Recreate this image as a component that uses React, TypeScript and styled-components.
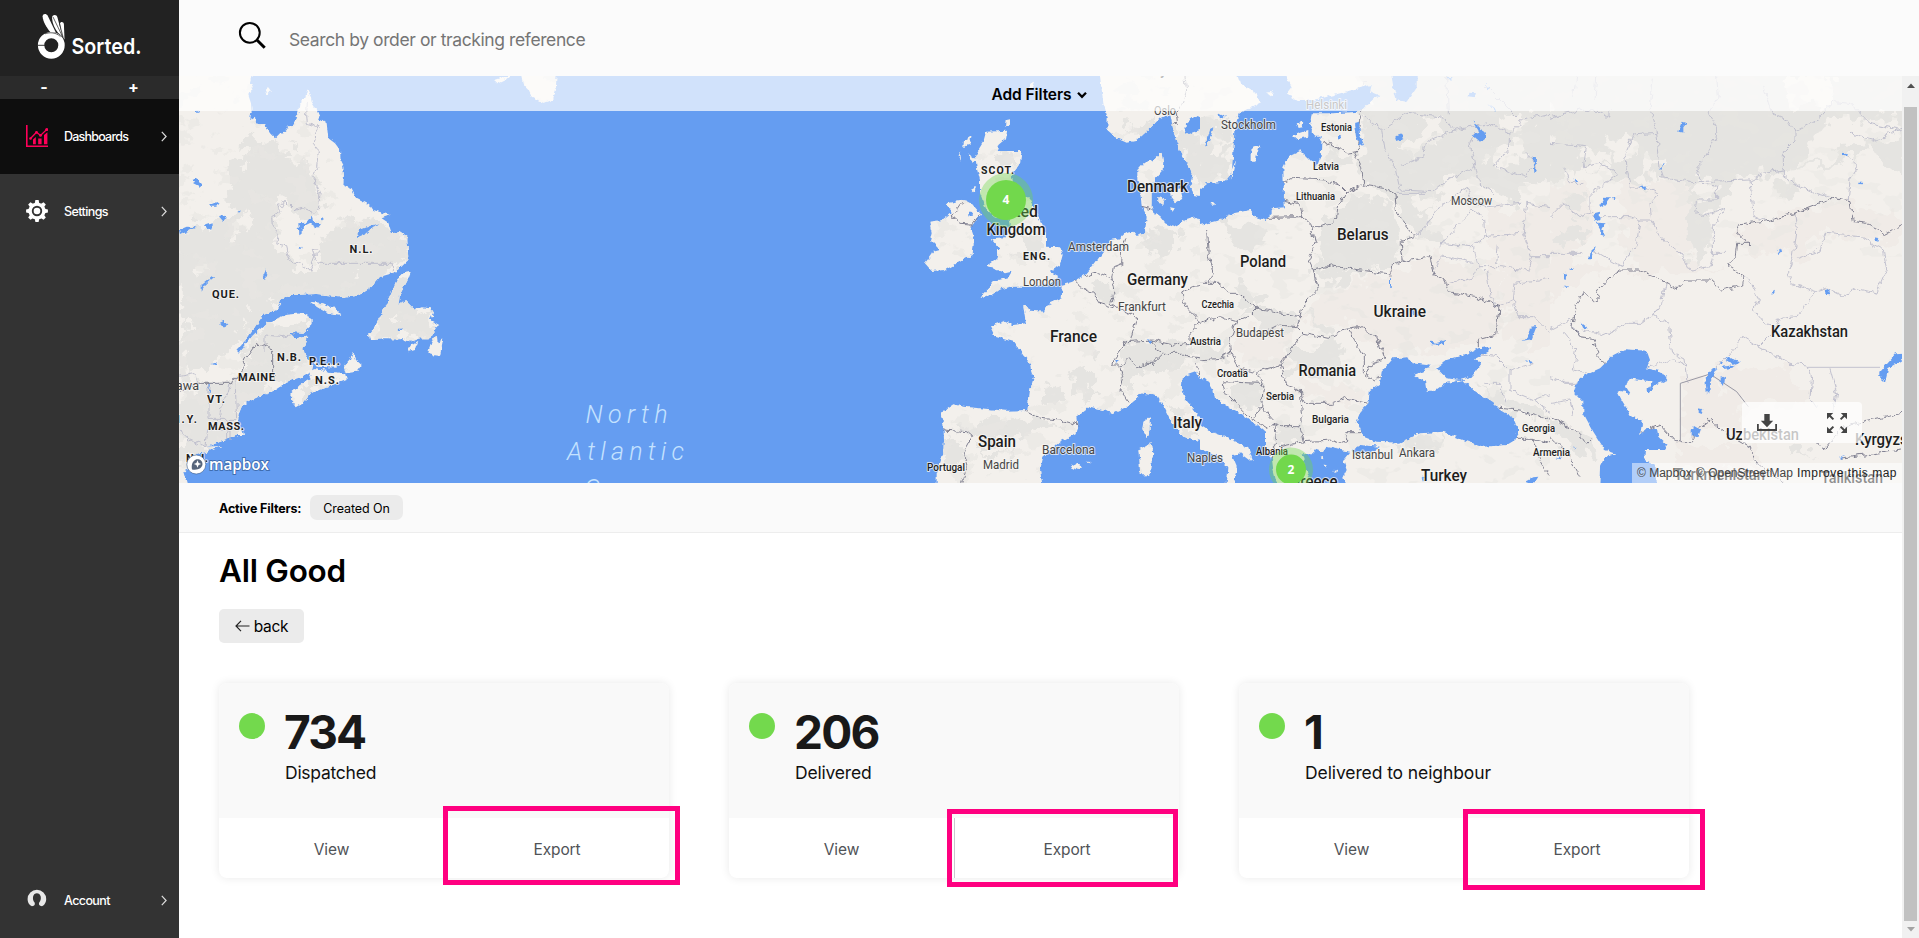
import React from "react";
import styled, { createGlobalStyle } from "styled-components";

const GlobalStyle = createGlobalStyle`
  * { box-sizing: border-box; }
  html, body, #root { height: 100%; }
  body { margin: 0; overflow: hidden; background: #fff; font-family: Inter, "Liberation Sans", sans-serif; color: #000; }
  button, input { font: inherit; border: 0; background: none; padding: 0; margin: 0; color: inherit; }
`;

/* ---------- shell ---------- */

const Shell = styled.div`
  display: flex;
  height: 938px;
  width: 1919px;
`;

const Sidebar = styled.aside`
  width: 179px;
  flex: none;
  display: flex;
  flex-direction: column;
  background: #333;
  color: #fff;
`;

const Brand = styled.div`
  height: 76px;
  background: #222;
`;

const SizeBar = styled.div`
  height: 23px;
  display: grid;
  grid-template-columns: 88px 91px;
  background: #2b2b2b;
`;

const SizeButton = styled.button`
  font-size: 16px;
  font-weight: 700;
  line-height: 23px;
  text-align: center;
`;

const NavItem = styled.a<{ $active?: boolean; $bottom?: boolean }>`
  height: 75px;
  margin-top: ${(p) => (p.$bottom ? "auto" : "0")};
  padding: 0 12px 0 26px;
  display: flex;
  align-items: center;
  background: ${(p) => (p.$active ? "#0e0e0e" : "transparent")};
`;

const NavIcon = styled.span`
  width: 38px;
  height: 24px;
  flex: none;
  svg { display: block; }
`;

const NavLabel = styled.span<{ $spacing: number }>`
  flex: 1;
  font-size: 12.5px;
  font-weight: 500;
  letter-spacing: ${(p) => p.$spacing}px;
`;

const Main = styled.main`
  flex: 1;
  min-width: 0;
  display: flex;
  flex-direction: column;
`;

const SearchBar = styled.header`
  height: 76px;
  flex: none;
  display: flex;
  align-items: flex-start;
  padding: 21px 0 0 59px;
  background: #fbfbfb;
`;

const SearchInput = styled.input`
  width: 420px;
  height: 24px;
  margin: 6px 0 0 21px;
  font-size: 17.5px;
  letter-spacing: -0.4px;
  outline: none;
  &::placeholder { color: #757575; opacity: 1; }
`;

const Body = styled.div`
  flex: 1;
  min-height: 0;
  display: flex;
`;

const Content = styled.div`
  width: 1723px;
  flex: none;
`;

const ScrollTrack = styled.div`
  width: 17px;
  display: flex;
  flex-direction: column;
  align-items: center;
  background: #f1f1f1;
`;

const ScrollThumb = styled.div`
  width: 13px;
  height: 814px;
  background: #c1c1c1;
`;

const ScrollArrow = styled.div<{ $down?: boolean }>`
  height: ${(p) => (p.$down ? "17px" : "31px")};
  padding-top: ${(p) => (p.$down ? "6px" : "7px")};
  svg { display: block; }
`;

/* ---------- map ---------- */

const MapPane = styled.section`
  position: relative;
  height: 407px;
  overflow: hidden;
  background: #659df1;
`;

const FilterBar = styled.button`
  position: absolute;
  inset: 0 0 auto 0;
  width: 100%;
  height: 35px;
  padding: 2px 2px 0 0;
  display: flex;
  align-items: center;
  justify-content: center;
  gap: 6px;
  background: rgba(255, 255, 255, 0.7);
  font-size: 15.5px;
  font-weight: 600;
  letter-spacing: -0.1px;
`;

const MapTools = styled.div`
  position: absolute;
  right: 40px;
  bottom: 40px;
  width: 120px;
  height: 41px;
  display: flex;
  align-items: center;
  justify-content: space-between;
  padding: 0 15px;
  border-radius: 4px;
  background: rgba(255, 255, 255, 0.75);
`;

const Attribution = styled.div`
  position: absolute;
  right: 0;
  bottom: 0;
  width: 270px;
  height: 20px;
  padding: 0 5px;
  display: flex;
  justify-content: space-between;
  background: rgba(255, 255, 255, 0.5);
  font: 12px/20px "Liberation Sans", sans-serif;
  white-space: nowrap;
`;

const Credit = styled.span<{ $spacing: number; $strong?: boolean }>`
  letter-spacing: ${(p) => p.$spacing}px;
  color: ${(p) => (p.$strong ? "#222" : "#444")};
`;

/* ---------- lower part ---------- */

const ActiveFilters = styled.div`
  height: 50px;
  padding: 0 40px 0 40px;
  display: flex;
  align-items: center;
  gap: 8px;
  border-bottom: 1px solid #ededed;
  background: #fafafa;
  font-size: 12.5px;
`;

const FilterTitle = styled.strong`
  width: 83px;
  padding-top: 2px;
  font-weight: 700;
  letter-spacing: -0.14px;
  white-space: nowrap;
`;

const Chip = styled.span`
  width: 93px;
  height: 25px;
  border-radius: 7px;
  background: #ebebeb;
  line-height: 27px;
  text-align: center;
  letter-spacing: -0.1px;
`;

const Panel = styled.div`
  padding: 21px 40px 0;
`;

const Title = styled.h1`
  margin: 0;
  height: 34px;
  font-size: 31.5px;
  line-height: 34px;
  font-weight: 600;
  letter-spacing: -0.25px;
`;

const BackButton = styled.button`
  display: flex;
  align-items: center;
  justify-content: center;
  gap: 4px;
  width: 85px;
  height: 34px;
  margin-top: 21px;
  border-radius: 5px;
  background: #ebebeb;
  font-size: 15.5px;
  letter-spacing: -0.3px;
`;

const Cards = styled.div`
  display: flex;
  gap: 60px;
  margin-top: 40px;
`;

const Card = styled.article`
  position: relative;
  width: 450px;
  height: 195px;
  border-radius: 8px;
  background: #fff;
  box-shadow: 0 0 10px rgba(0, 0, 0, 0.09);
`;

const CardTop = styled.div`
  height: 135px;
  display: flex;
  gap: 19px;
  padding: 30px 20px;
  border-radius: 8px 8px 0 0;
  background: #f9f9f9;
`;

const Dot = styled.span`
  width: 26px;
  height: 26px;
  flex: none;
  border-radius: 50%;
  background: #73d94d;
`;

const Count = styled.div`
  height: 38px;
  font-size: 46px;
  line-height: 39px;
  font-weight: 700;
  letter-spacing: -1.8px;
  color: #191919;
`;

const Status = styled.div<{ $spacing: number }>`
  margin: 11px 0 0 1px;
  font-size: 17.5px;
  line-height: 22px;
  letter-spacing: ${(p) => p.$spacing}px;
  color: #111;
`;

const CardActions = styled.div`
  height: 60px;
  display: grid;
  grid-template-columns: 1fr 1fr;
`;

const CardAction = styled.button`
  padding-top: 2px;
  font-size: 15.5px;
  color: #505357;
  letter-spacing: -0.1px;
  & + & { border-left: 1px solid #c9c9cd; }
`;

const Highlight = styled.div<{ $x: number; $y: number; $w: number; $h: number }>`
  position: absolute;
  left: ${(p) => p.$x}px;
  top: ${(p) => p.$y}px;
  width: ${(p) => p.$w}px;
  height: ${(p) => p.$h}px;
  border: 5px solid #ff0080;
  pointer-events: none;
`;

/* ---------- icons ---------- */

const Logo = () => (
  <svg width="179" height="76" viewBox="0 0 179 76" aria-label="Sorted.">
    <path d="M42.600 16.200c.2-2.800 3.700-3 5-.6l8.200 16.900-5.500-.5c-4-5-7.400-10.500-7.700-15.800z" fill="#fff" />
    <path d="M52 18c-.2-3.600 4.600-4.200 5.400-.8l5 19-4.200-3.200c-3.200-4.200-5.800-9-6.200-15z" fill="#fff" />
    <path d="M60 23.800c.2-2.600 3.600-2.500 3.900.2l.6 15.400-2.700-4.500z" fill="#fff" />
    <path d="m53 17 9.500 19.500M59.600 24l3.600 13.500" stroke="#222" strokeWidth=".7" fill="none" />
    <circle cx="51.300" cy="45.300" r="10.200" fill="none" stroke="#fff" strokeWidth="6.400" />
    <path d="M38 45.300h8" stroke="#222" strokeWidth=".9" />
    <path d="M45 33.800c5-1.800 11-1.400 15.500 2.800" stroke="#222" strokeWidth=".7" fill="none" />
    <text x="71.500" y="53.500" textLength="70" lengthAdjust="spacingAndGlyphs" fontFamily="Inter" fontSize="22" fontWeight="600" fill="#fff">Sorted.</text>
  </svg>
);

const Chevron = () => (
  <svg width="6" height="11" viewBox="0 0 6 11">
    <path d="m.8.900 4.300 4.600-4.300 4.600" fill="none" stroke="#ddd" strokeWidth="1.200" />
  </svg>
);

const ChartIcon = () => (
  <svg width="22" height="22" viewBox="0 0 22 22" fill="#ff0059">
    <path d="M0 0h1.600v20.400H22V22H0z" />
    <path d="M7 14.500 9.800 12v7.200H7zM12.200 13.400h3.400v5.800h-3.400zM18 10l3.400-2.800v12H18z" />
    <path d="m4.500 13.500 6-6.300 4 3.200L21 4.300" fill="none" stroke="#ff0059" strokeWidth="1.300" />
    <circle cx="4.500" cy="13.500" r="1.300" /><circle cx="10.500" cy="7.300" r="1.400" /><circle cx="14.500" cy="10.400" r="1.400" /><circle cx="20.700" cy="4.500" r="1.500" />
  </svg>
);

const GearIcon = () => (
  <svg width="22" height="22" viewBox="-11 -11 22 22" fill="#fff">
    {[0, 45, 90, 135, 180, 225, 270, 315].map((a) => (
      <path key={a} transform={`rotate(${a})`} d="M-2.300-7.500-1.600-10.900h3.200l.7 3.400z" />
    ))}
    <circle r="6.900" fill="none" stroke="#fff" strokeWidth="3.400" />
    <circle r="3.300" />
  </svg>
);

const AccountIcon = () => (
  <svg width="22" height="20" viewBox="0 0 22 20">
    <path d="M6 17.200C3.600 16.500 1.600 13.500 1.600 10a9.300 9.300 0 0 1 18.600 0c0 3.500-1.900 6.400-4.200 7.200-2.900-.4-3.500-1.600-2.800-3.600 1.400-1.500 1.900-3.700 1.500-6-.8-4.600-6.800-4.600-7.600 0-.4 2.300 0 4.500 1.500 6 .7 2 .1 3.200-2.600 3.600z" fill="#e8e8e8" />
  </svg>
);

const SearchIcon = () => (
  <svg width="30" height="30" viewBox="0 0 30 30" fill="none" stroke="#000">
    <circle cx="11.800" cy="11.800" r="9.900" strokeWidth="2" />
    <path d="m18.700 18.700 8 8" strokeWidth="3" />
  </svg>
);

const DownloadIcon = () => (
  <svg width="20" height="18" viewBox="0 0 20 18" fill="#444">
    <path d="M7.300 0h5.400v6.800h3.500L10 13.200 3.800 6.800h3.500z" />
    <path d="M0 10h1.800v5h16.400v-5H20v7H0z" />
  </svg>
);

const ExpandIcon = () => (
  <svg width="20" height="20" viewBox="-10 -10 20 20" fill="#444" stroke="#444">
    {[0, 90, 180, 270].map((a) => (
      <g key={a} transform={`rotate(${a})`}>
        <path d="M-10-10h6.200l-6.200 6.200z" stroke="none" />
        <path d="m-8-8 4.400 4.400" strokeWidth="2" />
      </g>
    ))}
  </svg>
);

/* ---------- map data ---------- */

const AMERICA = [
  "-20,-20 245,-20 245,18 240,35 248,50 235,75 243,100 245,125 240,150 255,140 258,160 285,165 300,190 315,205 330,190 345,185 355,170 375,160 385,125 388,100 405,85 412,58 422,80 425,95 440,120 450,145 470,160 475,205 495,220 510,240 512,275 520,290 522,320 520,345 545,355 560,385 600,405 610,420 660,435 635,445 655,458 665,490 690,485 712,500 715,570 690,595 668,610 630,620 605,650 575,672 520,680 440,672 365,675 335,685 322,718 280,735 255,770 235,800 202,840 205,848 250,795 290,760 345,735 395,730 425,745 425,765 400,788 355,785 375,805 415,800 400,835 405,855 430,885 425,905 400,920 350,935 330,950 315,960 275,975 245,990 215,1010 205,1035 205,1060 210,1080 230,1095 205,1095 165,1110 110,1130 155,1128 110,1145 85,1150 60,1195 40,1205 55,1260 -20,1260",
  "415,905 440,895 480,905 525,910 530,930 490,945 450,960 425,965 400,1000 380,1012 363,990 365,965 390,945 425,925",
  "550,845 558,870 575,885 560,905 530,910 522,890 540,870",
  "430,870 450,885 500,880 500,893 440,890",
  "420,695 460,700 495,715 512,735 470,728 440,710",
  "722,605 700,610 680,630 665,665 640,720 620,760 597,795 600,810 640,808 700,808 720,815 750,805 780,805 800,770 808,765 780,750 790,730 780,715 755,712 735,720 715,700 705,690 685,705 690,670 715,625",
  "800,795 803,820 820,808 810,858 790,855 775,845 785,815",
  "745,812 735,840 712,847 725,825",
  "1048,-10 1160,-10 1158,50 1145,90 1120,98 1085,80 1075,60 1060,45",
  "975,30 1000,22 1030,10 1010,26 985,38",
  "295,52 302,62 290,75 286,65",
];
const AMERICA_LAKES = [
  "67,330 80,325 95,342 90,350 70,340", "118,405 140,396 152,400 135,410 120,410", "145,440 160,435 172,445 158,455",
  "108,465 125,460 125,475 115,478", "27,480 50,470 80,472 60,480 30,495", "200,425 208,420 208,432",
  "385,460 408,458 425,437 430,452 448,465 440,475 420,462 395,475 395,495 388,492", "452,445 460,442 460,452",
  "562,502 570,480 600,468 625,460 605,475 585,492", "385,538 398,530 395,540", "277,625 288,598 292,615 285,630",
  "95,662 95,645 130,617 132,622 105,645", "150,758 162,752 172,765 160,770", "125,885 140,880 140,885", "78,122 90,122 88,128 78,128",
  "115,940 119,940 120,970 114,965", "682,780 692,774 690,784",
];
const AMERICA_PATCHES = [
  "170,270 230,215 320,210 410,260 440,340 460,440 390,440 330,390 310,460 330,560 390,600 680,600 560,680 330,690 240,800 170,850 40,930 27,480 90,470 180,420",
  "460,480 560,440 600,440 700,490 720,570 640,610 440,600", "640,640 710,620 690,700 790,730 780,800 610,800",
  "250,790 420,730 420,790 400,900 330,940 220,1000 200,1100 40,1180 27,950 200,930", "380,960 520,910 560,880 400,1000",
];
const AMERICA_LIGHT = [
  "215,290 240,265 250,295 225,310", "205,430 240,420 250,470 215,490 190,510", "350,440 430,460 420,560 350,570 335,500",
  "330,260 400,215 410,280 360,280", "65,590 100,580 110,610 75,615", "240,715 265,715 260,730", "70,900 200,850 190,920 100,940",
  "50,755 75,755 75,775 50,775", "200,760 215,755 220,770", "555,605 565,615 545,625", "675,740 690,730 688,755", "150,200 230,195 220,225 150,240",
];
const AMERICA_BORDERS = [
  "M412,95 L410,130 L412,160 L440,170 L450,165 L435,190 L430,220 L445,240 L440,290 L430,330 L440,350 L450,375 L445,420 L435,430 L400,415 L375,420 L345,390 L335,410 L320,405 L330,425 L308,440 L310,470 L325,490 L320,525 L350,530 L360,570 L385,580 L420,600 L435,560 L430,535 L450,545 L435,560 L445,580 H670 V610",
  "M285,840 V795 L340,800 L375,790",
  "M195,925 L200,1050 M180,940 L175,970 L155,995 L148,1045 M117,940 V1048 H195 M108,1080 H180 V1110 M170,1050 V1105 M110,1080 L105,1130 L60,1110 L27,1080 M27,920 L75,910 L80,940",
];
const AMERICA_NATIONS = ["M27,970 L70,940 H180 L185,925 L210,925 L225,870 L260,820 L270,832 L290,825 L308,845 V905 L320,930"];

const EUROPE = [
  "660,-20 660,18 665,60 670,100 683,140 682,180 710,205 740,218 770,212 810,175 840,145 870,130 880,180 890,220 905,255 930,295 940,320 932,345 940,375 975,380 975,350 1020,335 1020,-20",
  "1020,460 975,470 950,440 920,450 880,470 855,460 840,440 820,425 815,410 815,370 822,330 848,300 850,275 845,248 820,270 790,280 772,300 772,335 780,350 785,410 800,440 795,490 770,498 760,485 735,490 720,505 690,510 680,530 645,580 615,615 580,635 548,645 545,685 500,705 492,725 450,722 440,708 430,710 438,760 400,765 375,752 330,768 345,800 400,815 425,850 450,880 455,910 462,920 450,960 442,1020 380,1022 300,1015 250,1010 220,1003 180,1030 190,1060 192,1110 190,1150 170,1210 170,1260 490,1260 480,1200 490,1160 540,1115 590,1090 595,1065 592,1040 630,1010 660,1018 700,1030 740,1010 785,970 830,978 850,1010 870,1050 910,1100 970,1115 1000,1140 1020,1150 1020,1090 980,1075 960,1045 935,1010 915,985 905,960 908,920 950,905 965,940 985,950 1010,990 1020,990",
  "870,360 905,355 910,385 885,400 872,385", "835,378 855,385 850,405 835,395", "870,412 885,415 875,422",
  "318,185 382,182 378,205 355,225 350,243 425,243 420,280 395,315 400,340 450,390 480,450 498,490 498,530 540,532 548,555 540,585 510,605 535,618 510,640 450,650 390,650 355,660 335,675 300,682 345,632 385,622 395,605 375,610 345,598 315,590 350,565 355,535 335,508 375,505 390,470 385,440 340,435 320,420 300,370 300,330 290,290 285,260 298,235 310,215",
  "275,195 270,220 250,232 252,210", "262,250 292,270 280,278", "240,245 243,272 236,260", "272,360 290,350 280,368",
  "200,400 245,392 275,400 300,430 285,455 270,475 282,510 278,555 240,575 195,600 155,603 135,580 160,545 180,540 150,510 155,490 148,455 190,450 215,430",
  "812,1040 812,1080 800,1105 787,1080 790,1055", "775,1140 815,1120 820,1150 810,1205 795,1220 780,1205 778,1170",
  "572,1190 590,1180 605,1190 592,1200", "380,150 390,148 390,164 378,170", "620,1175 632,1176 628,1180", "450,40 462,35 455,55 445,60",
];
const EUROPE_LAKES = [
  "918,160 950,135 970,140 960,180 915,195", "990,175 1000,190 975,235 975,205", "265,425 277,425 275,438 265,436", "705,870 720,870 710,878", "800,810 820,815 812,822",
];
const EUROPE_PATCHES = [
  "880,180 960,200 1020,140 1020,340 950,350 900,250", "740,170 820,140 830,170 770,205", "330,240 400,230 410,290 340,290",
  "510,930 540,940 530,1010 480,1000", "570,880 640,870 640,960 580,990", "730,820 900,810 960,870 900,890 780,900 740,960 720,900",
  "800,480 900,470 900,540 830,570", "230,1080 350,1040 480,1050 560,1070 420,1090 340,1120", "290,1140 420,1140 330,1165",
  "630,640 700,650 690,710 640,680", "440,490 480,490 480,570 410,570", "200,1100 250,1120 240,1200 190,1200", "850,1000 930,1050 960,1110 900,1090",
];
const EUROPE_BORDERS = [
  "M915,18 L920,60 L905,110 L885,125 L890,160 L878,162", "M785,412 L818,420", "M975,470 L985,500 L980,560 L1000,610 L990,640 L940,650 L905,672 L925,720 L960,755 L930,790 L930,820 L880,825 L815,810 L740,815 L700,870 L695,885 L720,885 L750,865 L770,890 L800,880 L820,880 L850,850 L830,840 L815,815 M850,850 L905,850 L930,860 L1020,870 M945,870 L960,915 L1010,915 M720,890 L730,930 L720,960 L750,1000",
  "M738,505 L728,540 L725,580 L700,590 L695,620 L705,665 L690,700 L715,715 L770,740 L750,815 M580,630 L600,650 L640,670 L660,700 L705,715 M615,620 L655,608 L690,622",
  "M432,1020 L480,1045 L540,1050 L595,1065", "M190,1080 L260,1085 L278,1100 L250,1150 L262,1190 L245,1239", "M300,430 L275,462 L240,460 L215,440 L235,415 L245,400",
];

const EAST_WATER = [
  "100,-20 255,-20 258,18 275,50 260,70 290,90 340,90 400,75 460,60 490,50 515,45 510,65 535,75 500,105 480,125 400,130 335,130 330,165 345,200 365,200 362,260 350,290 325,265 300,240 270,255 250,295 252,390 255,412 215,415 215,435 195,450 165,440 150,420 100,430 60,450 -20,470 -20,375 20,340 75,335 95,310 100,250 103,180 120,130 180,100 170,70 120,40",
  "570,-10 650,-10 650,50 620,95 590,90 580,50", "462,160 478,155 480,195 492,225 480,228 468,200", "585,200 605,193 610,208 590,213",
  "815,150 838,175 855,185 860,200 840,215 818,195 838,188", "1000,260 1008,258 1007,290 1011,307 1003,305", "805,68 828,70 825,85 803,82", "742,20 758,22 750,30", "858,38 868,58 862,62",
  "865,102 888,120 885,125", "414,198 422,198 422,208 414,208", "15,230 30,180 40,175 25,220", "55,130 75,140 60,145",
  "580,865 625,862 635,880 680,885 695,880 680,900 645,915 675,935 680,965 700,965 735,940 790,930 820,960 880,1000 900,1020 940,1045 955,1080 945,1110 920,1125 850,1130 790,1110 730,1085 660,1090 600,1118 530,1115 490,1100 480,1075 470,1055 485,1020 505,1000 510,960 540,940 545,905",
  "870,830 865,845 825,865 845,880 815,920 780,930 740,925 710,895 740,870 790,855 835,835",
  "-20,935 20,925 40,960 45,985 90,1015 120,1030 165,1060 195,1085 195,1135 215,1160 220,1200 235,1260 -20,1260",
  "305,1150 345,1150 340,1135 370,1145 380,1130 420,1140 450,1145 430,1170 440,1200 430,1220 445,1260 340,1260 320,1200", "455,1140 480,1125 540,1130 520,1145 460,1150",
  "690,815 710,818 735,810 735,822 712,824 690,822", "567,625 573,625 573,653 567,653", "622,715 640,718 662,735 640,735",
  "990,770 1010,768 995,808 968,812 985,798", "978,870 995,876 990,882", "665,1222 672,1220 670,1235", "975,1235 1000,1222 1015,1220 1000,1245",
];
const EAST_ISLANDS = [
  "155,235 180,225 172,250 165,275 152,275 152,255", "108,270 103,300 92,328 95,300", "280,195 325,180 325,200 285,208", "290,160 310,155 308,172 296,174", "200,68 218,66 215,80",
  "-20,1050 35,1085 75,1100 145,1135 158,1170 150,1172 120,1150 95,1155 110,1190 100,1260 78,1260 85,1195 60,1160 -20,1130", "30,397 45,400 38,408",
  "370,1180 380,1182 375,1190", "400,1200 412,1198 408,1210", "360,1165 368,1160 370,1168",
];
const EAST_PATCHES = [
  "490,100 1100,100 1100,340 960,340 960,420 900,380 830,320 740,330 680,460 740,500 700,520 640,500 590,400 490,330", "-10,150 100,160 90,320 -10,340",
  "480,-20 1100,-20 1100,120 500,120", "350,480 450,370 580,400 600,520 570,600 480,600 380,600", "60,460 180,480 220,500 120,540", "330,560 380,600 540,610 400,640 350,620",
  "120,720 280,720 300,780 180,780", "300,720 400,780 430,900 380,900 260,930 270,840 360,840 390,810", "90,940 190,940 180,1040 90,980", "230,1060 310,1060 300,1130 240,1130",
  "140,640 200,680 160,720 100,680", "370,220 460,240 470,300 380,280", "830,940 960,1000 1050,1040 1050,1060 900,1010", "590,1120 730,1090 720,1130 600,1150", "-10,830 90,820 60,880 -10,880",
];
const EAST_LIGHT = [
  "700,140 740,150 720,200 640,250 600,230", "880,230 960,200 990,260 900,300", "740,340 800,330 820,370 750,400", "640,380 700,370 710,410 650,430", "830,250 870,260 850,290", "30,190 80,200 70,240 40,240", "900,150 940,130 1000,150 960,190",
];
const EAST_PINK = ["360,660 560,620 700,560 900,600 900,800 700,860 560,850 440,760 300,760", "860,430 1100,400 1100,860 920,800 900,600", "300,940 500,960 480,1000 320,990", "110,790 290,780 240,880 120,880"];
const EAST_BORDERS = [
  "M490,100 L480,150 L470,190 L478,235 L465,250 L485,290 L492,345 L460,360 L435,375 L410,415 L405,455 L365,470 L335,470", "M365,225 L390,218 L440,250 L470,245", "M250,340 L280,325 L375,330 L420,345 L445,370",
  "M245,392 L300,405 L308,440 L200,442 M308,440 L330,460 L345,520 L325,570 L340,600 L352,660 L305,710 L300,740 L200,720 L170,715 L120,670 L85,670 L60,640 L0,640", "M20,480 L25,560 L40,610 L25,640", "M492,345 L550,355 L585,375 L590,430 L645,500 L600,515 L610,575 L575,585 L572,612 L480,600 L400,585 L340,600",
  "M610,575 L690,560 L700,615 L735,630 L745,665 L830,680 L900,710 L890,795 L835,810 V835", "M170,715 L145,740 L110,755 L60,740 L0,760 M110,755 L90,810 L95,850 L60,865 L0,870 M95,850 L120,895 L170,905 L240,885 L310,790 L290,770 L240,765 L170,800 M290,770 L305,735 M310,790 L385,805 L440,775 L475,770 L530,800 L555,870 L520,880 L495,915 L525,930 L545,920 M440,775 L490,860 L490,910",
  "M240,885 L260,945 L300,960 L315,1000 L400,1000 L440,985 L505,1000 M170,905 L190,950 L185,1010 L220,1050 M65,935 L180,940 M65,935 L80,970 L160,1055 M185,1010 L160,1050 L200,1075 L225,1060 L250,1070 L300,1070 L310,1115 L400,1110 L435,1120 L440,1085 L485,1085 M300,960 L310,1060 M225,1060 L230,1120 L215,1170 M310,1115 L240,1130",
  "M900,1015 L960,1020 L1050,1050 M945,1105 L1000,1105 L1080,1130 M1000,1105 L1020,1170 L1060,1239",
];
const EAST_REGIONS = [
  "M490,140 L545,180 L555,240 L585,290 L600,360 M600,360 L700,365 L740,330 L825,290 L840,340 L880,370 M545,180 L620,130 L720,140 L765,180 L680,215 L670,260 L600,290 M765,180 L820,170 L870,160 L930,190 L925,240 L880,290 L980,320 L1005,280 L975,250 M825,290 L810,220 L825,180 M590,370 L680,370 M680,460 L720,410 L800,350 L815,390 L860,410 L960,400 M650,500 L690,450 M720,530 L780,460 L815,420 L850,440 L855,500 L810,530 L720,520 M820,530 L835,590 L820,620 L745,640 M700,600 L725,560 L820,580 M835,590 L900,590 L985,600 L995,560 L970,490 L980,400 L1050,410 M895,520 L890,580 M855,500 L960,490 M860,600 L870,680 L895,710 L940,690 L945,640 L1050,625 M995,560 L1050,560 M930,190 L970,150 L1050,130 M740,18 L745,130 M480,50 L500,30 M850,40 L960,150 M940,690 L950,740 L1000,740 L1050,790 M835,850 L890,860 L930,900 L1000,880 M930,900 L930,960 L1000,990 L1050,970 M850,940 L900,940 L915,1000 M1000,990 L1050,1030",
];

const ASIA_WATER = [
  "190,855 225,838 290,842 300,870 290,895 335,905 352,930 320,942 305,955 300,970 292,960 310,935 235,925 228,950 240,970 200,960 215,990 245,1040 278,1050 270,1095 290,1078 320,1075 325,1100 350,1125 340,1140 285,1140 283,1170 310,1180 320,1190 320,1260 148,1260 150,1190 165,1160 198,1152 165,1140 130,1085 100,1030 100,995 72,965 80,935 105,915 150,895",
  "470,970 466,925 485,898 502,895 480,935 478,970", "512,918 525,925 522,947 512,940", "525,860 572,874 560,885 530,875", "515,890 550,886 548,893 520,897", "513,878 522,878 518,886",
  "1080,850 1035,853 1010,880 988,905 988,920 1005,935 1015,895 1080,855", "432,1068 453,1080 445,1102 425,1095 425,1080", "445,1015 460,1018 455,1032 446,1028",
  "385,185 395,155 410,160 400,172 400,188", "325,295 342,280 338,288 330,300", "265,350 285,350 290,360", "148,410 165,382 183,382 170,400 152,410", "186,380 197,382 190,388",
  "132,430 150,425 148,450 135,455", "140,458 168,460 157,478 165,498 152,494 150,475", "118,568 122,540 138,528 128,550 123,568", "70,325 85,338 78,340", "57,597 72,592 66,602", "42,612 50,608 47,630 42,628", "40,648 54,645 48,654",
  "92,757 113,773 100,775", "878,248 891,250 888,256 878,255", "925,335 940,335 935,343 925,342", "972,502 988,505 985,515 975,512", "683,548 694,534 696,542 686,552", "664,668 675,662 672,672", "826,660 838,656 840,676 826,675", "868,1160 885,1155 870,1168", "20,1165 40,1155 35,1168", "70,1128 85,1135 75,1136",
];
const ASIA_PATCHES = [
  "-10,-20 1080,-20 1080,290 1000,300 960,230 880,290 780,290 690,300 600,320 540,330 540,380 480,450 470,560 430,590 410,500 420,350 380,320 320,330 280,350 240,340 180,300 100,290 -10,340",
  "30,370 100,380 90,430 50,420", "20,480 90,470 100,510 40,520", "680,340 750,340 730,380 680,370", "700,1120 760,1130 800,1170 720,1150", "-10,1040 80,1070 130,1120 140,1170 60,1140",
];
const ASIA_LIGHT = [
  "170,210 230,190 260,230 220,270 160,240", "780,200 860,150 1040,140 1050,200 880,220 840,270 760,280", "100,250 180,260 200,290 110,290", "430,320 500,340 500,390 440,380", "290,260 340,270 310,340 270,320", "690,20 850,20 840,110 720,110",
];
const ASIA_PINK = [
  "-10,340 100,340 130,440 60,560 200,600 50,650 -10,690", "200,330 420,340 410,580 520,610 300,610 240,590", "560,480 740,430 850,390 1080,440 1080,500 960,510 820,490 740,570 560,520", "500,900 560,870 700,900 780,980 740,1010 590,1000 510,930", "395,940 480,920 590,1000 560,1080 450,1080 395,1100", "380,1120 600,1130 640,1200 400,1200",
];
const ASIA_BORDERS = [
  "M165,880 L140,860 L150,850 L125,805 L90,800 L68,770 L80,700 L100,665 L130,695 L145,690 L140,660 L190,615 L215,600 L265,600 L345,635 L380,658 L405,630 L480,630 L515,660 L578,645 L582,618 L530,585 L555,560 L560,520 L600,520 L560,490 L570,465 L660,450 L735,430 L850,385 L900,395 L910,455 L950,460 L990,480 L1000,495 L1056,465",
  "M272,1090 L330,1065 L375,1115 L425,1115 M425,1110 L430,1085 L480,1048 L530,1090 L600,1130 L620,1180 L700,1239 M800,1120 L820,1140 L880,1070 L1056,1030 M870,1165 L1056,1140 M0,1040 L60,1070 L110,1120 L130,1100 M0,1100 L60,1160 L90,1220",
];
const ASIA_REGIONS = [
  "M95,780 L160,795 L235,760 L275,760 L310,735 L355,760 L365,850 L405,870 L415,940 M345,640 L335,700 L310,735 M285,890 L370,870 L408,885 M500,895 L550,840 L580,800 L625,830 L720,880 L770,885 L785,920 L780,980 L800,1010 M625,830 L665,790 L690,745 L740,740 L800,665 L830,655 L880,680 L920,655 L980,670 L1010,600 L1000,540 L930,500 L825,490 L810,540 L740,565 M735,430 L740,490 L730,560 L715,600 L725,640 L800,665 M585,620 L610,650 L625,690 L610,720 L650,765 L690,770 M840,895 L860,970 L850,1030",
  "M0,145 L90,120 L150,125 L180,140 L180,120 M80,20 L70,80 M140,20 L135,90 M310,20 L300,120 L320,190 L330,290 L340,320 M500,20 L505,80 L475,130 L500,170 L500,200 L460,270 L440,290 L455,340 L500,345 M640,50 L665,130 L710,150 L735,185 L735,210 L700,245 L700,320 L740,345 L800,370 L850,385 M735,185 L800,150 L850,95 L900,100 L960,160 L1056,180 M900,190 L980,215 L1056,170 M885,250 L925,290 L900,330 L895,390 M330,320 L430,335 L600,330 L610,440 L640,450 M600,330 L640,310 L700,300 M320,190 L250,195 L225,250 L240,350 L300,355 L325,370 L300,400 L305,450 L340,510 L400,560 L420,600 L480,590 L490,550 L530,550 M530,415 L490,470 L490,550 M500,345 L500,390 L440,390 L435,420 L460,440 L525,415 M100,290 L150,280 L200,310 M120,430 L120,370 L200,315 M130,440 L240,440 L270,450 L300,450 M270,450 L260,520 L215,590 M130,540 L215,590 M0,440 L40,400 L90,440 L130,430 M0,550 L100,550 M40,290 L60,340 L100,340 M0,220 L110,230 L100,290",
  "M0,780 L60,750 L90,800 M40,790 L80,840 L70,900 L110,910 M0,920 L50,940 L80,940 M0,1000 L60,990 L70,1040",
];

type Label = [string, number, number, number, number, number];
/* text, left, right, baseline, size, weight */
const LABELS: Label[] = [
  ["N.L.", 349.5, 372.5, 253, 11, 700], ["QUE.", 212, 239, 298, 11, 700], ["N.B.", 277, 301, 361, 11, 700], ["P.E.I.", 309, 340, 364.5, 11, 700],
  ["N.S.", 315, 339, 384, 11, 700], ["MAINE", 238, 275, 381, 11, 700], ["VT.", 207, 225, 402.5, 11, 700], ["MASS.", 208, 244, 429.5, 11, 700],
  ["N.Y.", 172, 197, 423, 11, 700], ["Ottawa", 159, 199, 390, 12.5, 400], ["N.J.", 186, 208, 462, 11, 700],
  ["SCOT.", 981, 1014, 174, 10.5, 700], ["United", 992, 1038, 217, 16, 500], ["Kingdom", 986.5, 1045.5, 235, 16, 500], ["ENG.", 1023, 1050, 260, 10.5, 700],
  ["London", 1023, 1061, 286, 13, 400], ["Amsterdam", 1068, 1129, 250.5, 13, 400], ["Denmark", 1127, 1188, 192, 16, 500], ["Germany", 1127, 1188, 284.5, 16, 500],
  ["Frankfurt", 1118, 1166, 311, 13, 400], ["France", 1050, 1097, 342, 16, 500], ["Spain", 978, 1016, 447, 16, 500], ["Madrid", 983, 1019, 468.5, 13, 400],
  ["Portugal", 927, 965, 470.5, 11, 500], ["Barcelona", 1042, 1095, 454, 13, 400], ["Italy", 1173, 1202, 428, 16, 500], ["Naples", 1187, 1223, 462, 13, 400],
  ["Oslo", 1154, 1176, 115, 13, 400], ["Norway", 1118, 1167, 75, 16, 500], ["Czechia", 1201.5, 1234, 308, 11, 500], ["Austria", 1190, 1221, 344.5, 11, 500],
  ["Budapest", 1236, 1284, 337, 13, 400], ["Stockholm", 1221, 1276, 128.5, 13, 400], ["Helsinki", 1306, 1347, 109, 13, 400], ["Estonia", 1321, 1352, 131, 11, 500],
  ["Latvia", 1313, 1339, 170, 11, 500], ["Lithuania", 1296, 1335, 200, 11, 500], ["Poland", 1240, 1286, 266.5, 16, 500], ["Belarus", 1337, 1388.5, 240, 16, 500],
  ["Ukraine", 1373.5, 1426, 317, 16, 500], ["Romania", 1298.5, 1356, 376, 16, 500], ["Croatia", 1217, 1248, 377, 11, 500], ["Serbia", 1266, 1294, 400, 11, 500],
  ["Bulgaria", 1312, 1349, 423, 11, 500], ["Albania", 1256, 1288, 455, 11, 500], ["Istanbul", 1352, 1393, 459, 13, 400], ["Ankara", 1399, 1435, 456.5, 13, 400],
  ["Turkey", 1421, 1467, 480.5, 16, 500], ["Greece", 1290, 1337.5, 486.5, 16, 500], ["Moscow", 1451, 1492, 204.5, 13, 400], ["Georgia", 1522, 1555, 431.5, 11, 500],
  ["Armenia", 1533, 1570, 456, 11, 500], ["Kazakhstan", 1771, 1848, 337, 16, 500], ["Uzbekistan", 1726, 1799, 440, 16, 500], ["Kyrgyzstan", 1855, 1929, 445, 16, 500],
  ["Turkmenistan", 1674, 1765, 480, 16, 500], ["Tajikistan", 1821, 1883, 483, 16, 500],
];

const LAND = "#f3f0ec";
const WATER = "#659df1";

const Polys = ({ points, fill }: { points: string[]; fill: string }) => (
  <g fill={fill}>{points.map((p, i) => <polygon key={i} points={p} />)}</g>
);

const Lines = ({ paths, nation }: { paths: string[]; nation?: boolean }) => (
  <g fill="none" stroke={nation ? "#78788b" : "#bcbccb"} strokeWidth={nation ? 2.8 : 2.8} strokeLinejoin="round" filter="url(#wiggle)">
    {paths.map((d, i) => <path key={i} d={d} />)}
  </g>
);

const Relief = ({ grey, light = [], pink = [] }: { grey: string[]; light?: string[]; pink?: string[] }) => (
  <g filter="url(#ragged)">
    <Polys points={pink} fill="#f0ebe7" />
    <Polys points={grey} fill="#e5e4e1" />
    <Polys points={light} fill={LAND} />
  </g>
);

const Marker = ({ x, y, r, halo, count }: { x: number; y: number; r: number; halo: number; count: number }) => (
  <g>
    <circle cx={x} cy={y} r={halo} fill="#72d84c" fillOpacity=".38" />
    <circle cx={x} cy={y} r={r} fill="#72d84c" />
    <text x={x} y={y + 4} textAnchor="middle" fontFamily="Open Sans" fontSize="12" fontWeight="700" fill="#fff">{count}</text>
  </g>
);

const WorldMap = () => (
  <svg width="1723" height="407" viewBox="179 76 1723 407">
    <defs>
      <filter id="coast" x="-10%" y="-10%" width="120%" height="120%" colorInterpolationFilters="sRGB">
        <feTurbulence type="fractalNoise" baseFrequency=".07" numOctaves="2" seed="4" />
        <feDisplacementMap in="SourceGraphic" scale="15" xChannelSelector="R" yChannelSelector="G" />
      </filter>
      <filter id="wiggle" x="-10%" y="-10%" width="120%" height="120%" colorInterpolationFilters="sRGB">
        <feTurbulence type="fractalNoise" baseFrequency=".05" numOctaves="2" seed="9" />
        <feDisplacementMap in="SourceGraphic" scale="22" xChannelSelector="R" yChannelSelector="G" />
      </filter>
      <filter id="ragged" x="-10%" y="-10%" width="120%" height="120%" colorInterpolationFilters="sRGB">
        <feTurbulence type="fractalNoise" baseFrequency=".022" numOctaves="3" seed="2" />
        <feDisplacementMap in="SourceGraphic" scale="100" xChannelSelector="R" yChannelSelector="G" />
      </filter>
      <filter id="mottle" x="0" y="0" width="100%" height="100%" colorInterpolationFilters="sRGB">
        <feTurbulence type="fractalNoise" baseFrequency=".014 .022" numOctaves="3" seed="7" />
        <feColorMatrix values="0 0 0 0 .91  0 0 0 0 .905  0 0 0 0 .89  30 0 0 0 -18" />
        <feComposite in2="SourceGraphic" operator="in" />
      </filter>
      <clipPath id="america">{AMERICA.map((p, i) => <polygon key={i} points={p} />)}</clipPath>
      <clipPath id="europe">{EUROPE.map((p, i) => <polygon key={i} points={p} />)}</clipPath>
    </defs>

    <rect x="179" y="76" width="1723" height="407" fill={WATER} />

    <svg x="179" y="76" width="460" height="407" viewBox="27 18 1380 1221">
      <g filter="url(#coast)">
        <Polys points={AMERICA} fill={LAND} />
        <g clipPath="url(#america)">
          <Relief grey={AMERICA_PATCHES} light={AMERICA_LIGHT} />
          <rect width="1400" height="1250" filter="url(#mottle)" opacity=".6" />
        </g>
        <Polys points={AMERICA_LAKES} fill={WATER} />
      </g>
      <Lines paths={AMERICA_BORDERS} />
      <Lines paths={AMERICA_NATIONS} nation />
    </svg>

    <svg x="880" y="76" width="320" height="407" viewBox="0 18 960 1221">
      <g filter="url(#coast)">
        <Polys points={EUROPE} fill={LAND} />
        <g clipPath="url(#europe)">
          <Relief grey={EUROPE_PATCHES} />
          <rect width="1020" height="1250" filter="url(#mottle)" opacity=".6" />
        </g>
        <Polys points={EUROPE_LAKES} fill={WATER} />
      </g>
      <Lines paths={EUROPE_BORDERS} nation />
    </svg>

    <svg x="1200" y="76" width="350" height="407" viewBox="0 18 1050 1221">
      <rect x="-20" y="0" width="1100" height="1260" fill={LAND} />
      <Relief grey={EAST_PATCHES} light={EAST_LIGHT} pink={EAST_PINK} />
      <rect width="1060" height="1250" filter="url(#mottle)" opacity=".5" />
      <Lines paths={EAST_REGIONS} />
      <Lines paths={EAST_BORDERS} nation />
      <g filter="url(#coast)">
        <Polys points={EAST_WATER} fill={WATER} />
        <Polys points={EAST_ISLANDS} fill={LAND} />
      </g>
    </svg>

    <svg x="1550" y="76" width="352" height="407" viewBox="0 18 1056 1221">
      <rect x="-20" y="0" width="1100" height="1260" fill={LAND} />
      <Relief grey={ASIA_PATCHES} light={ASIA_LIGHT} pink={ASIA_PINK} />
      <rect width="1060" height="560" filter="url(#mottle)" opacity=".4" />
      <Lines paths={ASIA_REGIONS} />
      <Lines paths={ASIA_BORDERS} nation />
      <path d="M391,1115 V940 L480,912 L560,965 L595,1010" fill="none" stroke="#8a8a99" strokeWidth="2.600" />
      <path d="M772,892 H990" stroke="#bcbccb" strokeWidth="2.600" />
      <g filter="url(#coast)"><Polys points={ASIA_WATER} fill={WATER} /></g>
    </svg>

    <g fontFamily="Roboto" fontSize="25" fontWeight="300" fontStyle="italic" fill="#c4e2ff">
      <text x="585.500" y="422.500" textLength="82">North</text>
      <text x="567" y="459.500" textLength="117">Atlantic</text>
      <text x="584" y="496.500" textLength="85">Ocean</text>
    </g>

    <g fontFamily="Roboto" stroke="#f8f7f5" strokeOpacity=".75" strokeWidth="2" paintOrder="stroke" strokeLinejoin="round">
      {LABELS.map(([text, x0, x1, y, size, weight]) => (
        <text key={text} x={x0} y={y} fontSize={size} fontWeight={weight} fill={weight === 400 ? "#444" : "#1d1d1d"}
          textLength={x1 - x0} lengthAdjust={weight === 700 ? "spacing" : "spacingAndGlyphs"}>{text}</text>
      ))}
    </g>

    <Marker x={1006} y={200} r={20} halo={27} count={4} />
    <Marker x={1291} y={469.5} r={15} halo={22} count={2} />

    <g>
      <circle cx="196.300" cy="464.500" r="9.500" fill="#fff" stroke="#3f5f8c" strokeOpacity=".6" />
      <path d="M192 469.500c-.7-4 .1-8 3.500-9.700 3.200-1.500 7 .8 7 4.300 0 4.200-5 6.600-10.500 5.400z" fill="#56657c" />
      <path d="m197.500 460.300 1.100 2.600 2.600 1.100-2.600 1.100-1.100 2.600-1.100-2.600-2.600-1.100 2.600-1.100z" fill="#fff" />
      <text x="209" y="470" textLength="60" lengthAdjust="spacingAndGlyphs" fontFamily="Open Sans" fontSize="16.500" fontWeight="600" fill="#fff" stroke="#3f6db0" strokeWidth="1.800" paintOrder="stroke">mapbox</text>
    </g>
  </svg>
);

/* ---------- page ---------- */

const CARDS = [
  { count: "734", status: "Dispatched", spacing: -0.25, mark: { $x: 224, $y: 123, $w: 237, $h: 79 } },
  { count: "206", status: "Delivered", spacing: -0.2, mark: { $x: 218, $y: 126, $w: 231, $h: 78 } },
  { count: "1", status: "Delivered to neighbour", spacing: -0.1, mark: { $x: 224, $y: 126, $w: 242, $h: 81 } },
];

export default function App() {
  return (
    <Shell>
      <GlobalStyle />
      <Sidebar>
        <Brand><Logo /></Brand>
        <SizeBar>
          <SizeButton>-</SizeButton>
          <SizeButton>+</SizeButton>
        </SizeBar>
        <NavItem $active>
          <NavIcon><ChartIcon /></NavIcon>
          <NavLabel $spacing={-0.78}>Dashboards</NavLabel>
          <Chevron />
        </NavItem>
        <NavItem>
          <NavIcon><GearIcon /></NavIcon>
          <NavLabel $spacing={-0.6}>Settings</NavLabel>
          <Chevron />
        </NavItem>
        <NavItem $bottom>
          <NavIcon><AccountIcon /></NavIcon>
          <NavLabel $spacing={-0.6}>Account</NavLabel>
          <Chevron />
        </NavItem>
      </Sidebar>
      <Main>
        <SearchBar>
          <SearchIcon />
          <SearchInput placeholder="Search by order or tracking reference" />
        </SearchBar>
        <Body>
          <Content>
            <MapPane>
              <WorldMap />
              <FilterBar>
                Add Filters
                <svg width="10" height="8" viewBox="0 0 10 8"><path d="m1 1.800 4 4 4-4" fill="none" stroke="#000" strokeWidth="2.300" /></svg>
              </FilterBar>
              <MapTools>
                <DownloadIcon />
                <ExpandIcon />
              </MapTools>
              <Attribution>
                <Credit $spacing={0}>© Mapbox</Credit>
                <Credit $spacing={0}>© OpenStreetMap</Credit>
                <Credit $spacing={0.5} $strong>Improve this map</Credit>
              </Attribution>
            </MapPane>
            <ActiveFilters>
              <FilterTitle>Active Filters:</FilterTitle>
              <Chip>Created On</Chip>
            </ActiveFilters>
            <Panel>
              <Title>All Good</Title>
              <BackButton>
                <svg width="15" height="12" viewBox="0 0 15 12"><path d="M14.500 6H1.200M6 .9 1 6l5 5.100" fill="none" stroke="#222" strokeWidth="1.200" /></svg>
                back
              </BackButton>
              <Cards>
                {CARDS.map((c) => (
                  <Card key={c.status}>
                    <CardTop>
                      <Dot />
                      <div>
                        <Count>{c.count}</Count>
                        <Status $spacing={c.spacing}>{c.status}</Status>
                      </div>
                    </CardTop>
                    <CardActions>
                      <CardAction>View</CardAction>
                      <CardAction>Export</CardAction>
                    </CardActions>
                    <Highlight {...c.mark} />
                  </Card>
                ))}
              </Cards>
            </Panel>
          </Content>
          <ScrollTrack>
            <ScrollArrow><svg width="8" height="5" viewBox="0 0 8 5"><path d="m0 5 4-4.500L8 5z" fill="#505050" /></svg></ScrollArrow>
            <ScrollThumb />
            <ScrollArrow $down><svg width="8" height="5" viewBox="0 0 8 5"><path d="m0 0 4 4.500L8 0z" fill="#a3a3a3" /></svg></ScrollArrow>
          </ScrollTrack>
        </Body>
      </Main>
    </Shell>
  );
}
